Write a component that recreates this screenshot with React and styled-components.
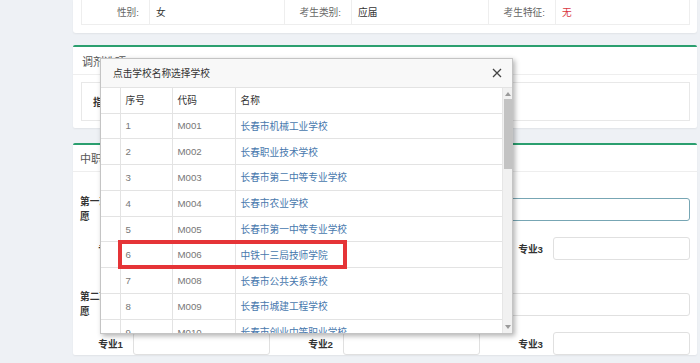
import React from "react";
import styled, { createGlobalStyle } from "styled-components";

const GlobalStyle = createGlobalStyle`
  html, body { margin: 0; padding: 0; }
  body {
    font-family: "Liberation Sans", "Noto Sans CJK SC", sans-serif;
    font-size: 9.7px;
    color: #333;
    background: #eef1f5;
  }
  * { box-sizing: border-box; }
`;

const Page = styled.div`
  position: relative;
  height: 363px;
  overflow: hidden;
  background: #eef1f5;
  padding: 0 3px 0 73px;
`;

const Main = styled.div`
  display: flex;
  flex-direction: column;
`;

const InfoCard = styled.div`
  background: #fff;
  padding: 0 7px 8px 8px;
  border-radius: 0 0 3px 3px;
  box-shadow: 0 1px 2px rgba(0, 0, 0, 0.06);
`;

const InfoTable = styled.div`
  display: grid;
  grid-template-columns: 67px 135px 67px 137px 67px 1fr;
  height: 25px;
  border: 1px solid #eeeeee;
  border-top: none;
`;

const InfoCell = styled.div`
  display: flex;
  align-items: center;
  justify-content: ${(p) => (p.$label ? "flex-end" : "flex-start")};
  padding: ${(p) => (p.$label ? "0 10px 0 0" : "0 0 0 6px")};
  border-left: ${(p) => (p.$first ? "none" : "1px solid #eeeeee")};
  color: ${(p) => (p.$red ? "#d9363e" : p.$label ? "#666" : "#333")};
`;

const Panel = styled.section`
  margin-top: ${(p) => p.$top}px;
  background: #fff;
  border-top: 2px solid #2b9f6f;
  border-radius: 2px;
  box-shadow: 0 1px 2px rgba(0, 0, 0, 0.06);
`;

const PanelTitle = styled.div`
  height: ${(p) => p.$h}px;
  display: flex;
  align-items: center;
  padding-left: ${(p) => p.$pl}px;
  font-size: 11px;
  color: #555;
  border-bottom: 1px solid #eeeeee;
`;

const OptionBody = styled.div`
  padding: 7px 7px 7px 8px;
`;

const OptionBox = styled.div`
  height: 39px;
  border: 1px solid #e8e8e8;
  display: flex;
  align-items: center;
  padding-left: 11px;
  gap: 12px;
`;

const BoldLabel = styled.span`
  font-weight: bold;
  color: #333;
`;

const FormBody = styled.div`
  padding: 22px 7px 0 7px;
  display: flex;
  flex-direction: column;
`;

const Group = styled.div`
  display: flex;
  flex-direction: column;
  gap: 20px;
  margin-top: ${(p) => p.$top}px;
`;

const VolunteerRow = styled.div`
  display: grid;
  grid-template-columns: 53px 1fr;
  align-items: center;
  height: 23px;
`;

const VolunteerLabel = styled.div`
  font-weight: bold;
  line-height: 15px;
  padding-right: 17px;
  color: #333;
`;

const MajorsRow = styled.div`
  display: flex;
  gap: 20px;
  height: 23px;
`;

const MajorField = styled.div`
  display: grid;
  grid-template-columns: 53px 1fr;
  align-items: center;
  width: ${(p) => (p.$grow ? "auto" : "190px")};
  flex: ${(p) => (p.$grow ? "1" : "none")};
`;

const MajorLabel = styled.div`
  font-weight: bold;
  text-align: right;
  padding-right: 10px;
  color: #333;
`;

const Input = styled.div`
  height: 23px;
  background: #fff;
  border: 1px solid ${(p) => (p.$focus ? "#77a6b4" : "#e0e0e0")};
  border-radius: 3px;
`;

/* Modal */
const Modal = styled.div`
  position: absolute;
  left: 100px;
  top: 58px;
  width: 413px;
  height: 276px;
  background: #fff;
  border: 1px solid #c4c4c4;
  box-shadow: 2px 2px 5px rgba(0, 0, 0, 0.3);
  display: flex;
  flex-direction: column;
`;

const ModalHeader = styled.div`
  height: 29px;
  flex: none;
  display: flex;
  align-items: center;
  justify-content: space-between;
  padding: 0 9px 0 12px;
  background: #f8f8f8;
  border-bottom: 1px solid #e3e3e3;
  color: #333;
`;

const CloseButton = styled.button`
  border: none;
  background: none;
  padding: 0;
  width: 12px;
  height: 12px;
  display: flex;
  align-items: center;
  justify-content: center;
  cursor: pointer;
`;

const ModalBody = styled.div`
  position: relative;
  flex: 1;
  display: flex;
  min-height: 0;
`;

const TableWrap = styled.div`
  flex: 1;
  overflow: hidden;
`;

const Table = styled.table`
  width: 100%;
  border-collapse: collapse;
  table-layout: fixed;
`;

const Th = styled.th`
  height: 25px;
  padding: 0 0 0 5px;
  text-align: left;
  font-weight: normal;
  color: #333;
  border-bottom: 1px solid #e3e3e3;
  border-left: ${(p) => (p.$first ? "none" : "1px solid #e3e3e3")};
`;

const Td = styled.td`
  height: 25.8px;
  padding: 0 0 0 5px;
  white-space: nowrap;
  overflow: hidden;
  color: ${(p) => (p.$link ? "#4778ad" : "#777")};
  border-bottom: 1px solid #e3e3e3;
  border-left: ${(p) => (p.$first ? "none" : "1px solid #e3e3e3")};
`;

const Scrollbar = styled.div`
  width: 10px;
  flex: none;
  background: #f1f1f1;
  border-left: 1px solid #e6e6e6;
  display: flex;
  flex-direction: column;
  align-items: center;
  padding: 4px 0 4px;
`;

const Thumb = styled.div`
  width: 8px;
  height: 70px;
  margin-top: 3px;
  background: #c3c3c3;
`;

const Spacer = styled.div`
  flex: 1;
`;

const Highlight = styled.div`
  position: absolute;
  left: 17px;
  top: 152px;
  width: 229px;
  height: 29px;
  border: 4px solid #e53437;
  pointer-events: none;
`;

const Arrow = ({ up }) => (
  <svg width="6" height="4" viewBox="0 0 6 4">
    <path d={up ? "M0 4 L3 0 L6 4 Z" : "M0 0 L3 4 L6 0 Z"} fill="#9a9a9a" />
  </svg>
);

const schools = [
  ["1", "M001", "长春市机械工业学校"],
  ["2", "M002", "长春职业技术学校"],
  ["3", "M003", "长春市第二中等专业学校"],
  ["4", "M004", "长春市农业学校"],
  ["5", "M005", "长春市第一中等专业学校"],
  ["6", "M006", "中铁十三局技师学院"],
  ["7", "M008", "长春市公共关系学校"],
  ["8", "M009", "长春市城建工程学校"],
  ["9", "M010", "长春市创业中等职业学校"],
  ["10", "M011", "长春市第三中等专业学校"],
];

const Majors = () => (
  <MajorsRow>
    <MajorField>
      <MajorLabel>专业1</MajorLabel>
      <Input />
    </MajorField>
    <MajorField>
      <MajorLabel>专业2</MajorLabel>
      <Input />
    </MajorField>
    <MajorField $grow>
      <MajorLabel>专业3</MajorLabel>
      <Input />
    </MajorField>
  </MajorsRow>
);

export default function App() {
  return (
    <>
      <GlobalStyle />
      <Page>
        <Main>
          <InfoCard>
            <InfoTable>
              <InfoCell $label $first>性别:</InfoCell>
              <InfoCell>女</InfoCell>
              <InfoCell $label>考生类别:</InfoCell>
              <InfoCell>应届</InfoCell>
              <InfoCell $label>考生特征:</InfoCell>
              <InfoCell $red>无</InfoCell>
            </InfoTable>
          </InfoCard>

          <Panel $top={12}>
            <PanelTitle $h={28} $pl={9}>调剂选项</PanelTitle>
            <OptionBody>
              <OptionBox>
                <BoldLabel>指定调剂</BoldLabel>
                <span>服从调剂</span>
              </OptionBox>
            </OptionBody>
          </Panel>

          <Panel $top={15}>
            <PanelTitle $h={27} $pl={7}>中职志愿</PanelTitle>
            <FormBody>
              <Group $top={0}>
                <VolunteerRow>
                  <VolunteerLabel>第一志愿</VolunteerLabel>
                  <Input $focus />
                </VolunteerRow>
                <Majors />
              </Group>
              <Group $top={29}>
                <VolunteerRow>
                  <VolunteerLabel>第二志愿</VolunteerLabel>
                  <Input />
                </VolunteerRow>
                <Majors />
              </Group>
            </FormBody>
          </Panel>
        </Main>

        <Modal>
          <ModalHeader>
            <span>点击学校名称选择学校</span>
            <CloseButton aria-label="关闭">
              <svg width="10" height="10" viewBox="0 0 10 10">
                <path d="M1 1 L9 9 M9 1 L1 9" stroke="#444" strokeWidth="1.3" />
              </svg>
            </CloseButton>
          </ModalHeader>
          <ModalBody>
            <TableWrap>
              <Table>
                <colgroup>
                  <col style={{ width: 19 }} />
                  <col style={{ width: 52 }} />
                  <col style={{ width: 63 }} />
                  <col />
                </colgroup>
                <thead>
                  <tr>
                    <Th $first></Th>
                    <Th>序号</Th>
                    <Th>代码</Th>
                    <Th>名称</Th>
                  </tr>
                </thead>
                <tbody>
                  {schools.map(([n, code, name]) => (
                    <tr key={code}>
                      <Td $first></Td>
                      <Td>{n}</Td>
                      <Td>{code}</Td>
                      <Td $link>{name}</Td>
                    </tr>
                  ))}
                </tbody>
              </Table>
            </TableWrap>
            <Scrollbar>
              <Arrow up />
              <Thumb />
              <Spacer />
              <Arrow />
            </Scrollbar>
            <Highlight />
          </ModalBody>
        </Modal>
      </Page>
    </>
  );
}
